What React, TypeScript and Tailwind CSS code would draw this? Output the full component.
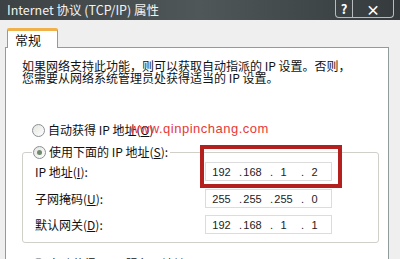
import React from 'react';

interface RadioProps {
  checked?: boolean;
  children: React.ReactNode;
}

function Radio({ checked = false, children }: RadioProps) {
  return (
    <div className="flex h-[16px] items-center">
      <span className="flex h-[13px] w-[13px] items-center justify-center rounded-full border border-[#8a9096] bg-gradient-to-br from-[#e4e4e0] to-white">
        {checked && <span className="h-[5px] w-[5px] rounded-full bg-[#6f8a6f]" />}
      </span>
      <span className="ml-[3px] whitespace-nowrap">{children}</span>
    </div>
  );
}

interface IpFieldProps {
  octets: string[];
}

function IpField({ octets }: IpFieldProps) {
  return (
    <div className="flex h-[19px] w-[127px] items-center border border-[#dcdcdc] bg-white font-['Liberation_Sans',sans-serif] text-[11px] text-[#222]">
      {octets.map((o, i) => (
        <div key={i} className="relative flex w-[31px] justify-center">
          {i > 0 && <span className="absolute left-[2px]">.</span>}
          <span>{o}</span>
        </div>
      ))}
    </div>
  );
}

interface RowProps {
  label: React.ReactNode;
  octets: string[];
  className?: string;
}

function Row({ label, octets, className = '' }: RowProps) {
  return (
    <div className={`flex items-center ${className}`}>
      <div className="w-[173px] pl-[3px] whitespace-nowrap">{label}</div>
      <IpField octets={octets} />
    </div>
  );
}

export default function App() {
  return (
    <div className="relative h-[259px] w-[400px] overflow-hidden bg-[#efefef] font-['Noto_Sans_CJK_SC',sans-serif] text-[12px] leading-[12px] text-[#111]">
      {/* title bar */}
      <div className="flex h-[20px] items-center justify-between bg-gradient-to-r from-[#3d4244] via-[#4f5759] to-[#353b3d] pl-[7px] pr-[6px]">
        <span className="text-[12.5px] text-[#f2f2f2]">Internet 协议 (TCP/IP) 属性</span>
        <div className="-mt-[5px] flex h-[20px] rounded-b-[4px] border border-t-0 border-[#b8bcbe] text-[13px] font-bold text-white">
          <div className="flex w-[17px] items-center justify-center border-r border-[#b8bcbe] pt-[3px]">?</div>
          <div className="flex w-[40px] items-center justify-center pt-[3px] text-[14px]">×</div>
        </div>
      </div>

      {/* body */}
      <div className="pl-[5px] pr-[11px] pt-[8px]">
        <div className="relative z-10 -mb-px ml-[2px] flex h-[20px] w-[51px] items-center rounded-t-[2px] border border-b-0 border-t-[3px] border-[#919b9c] border-t-[#f0b14c] bg-white pl-[7px] text-[13px]">
          常规
        </div>
        <div className="h-[220px] border border-[#919b9c] bg-white">
          <div className="pl-[16px] pt-[12px]">
            <p>如果网络支持此功能，则可以获取自动指派的 IP 设置。否则，</p>
            <p>您需要从网络系统管理员处获得适当的 IP 设置。</p>
          </div>

          <div className="mt-[38px] pl-[26px]">
            <Radio>
              自动获得 IP 地址(<span className="underline">O</span>)
            </Radio>
          </div>

          <fieldset className="ml-[16px] mt-[6px] w-[357px] rounded-[3px] border border-[#d0d0c8] pb-[8px] pl-[9px]">
            <legend className="pl-px pr-[2px]">
              <Radio checked>
                使用下面的 IP 地址(<span className="underline">S</span>):
              </Radio>
            </legend>
            <Row
              className="mt-[2px]"
              label={<>IP 地址(<span className="underline">I</span>):</>}
              octets={['192', '168', '1', '2']}
            />
            <Row
              className="mt-[8px]"
              label={<>子网掩码(<span className="underline">U</span>):</>}
              octets={['255', '255', '255', '0']}
            />
            <Row
              className="mt-[7px]"
              label={<>默认网关(<span className="underline">D</span>):</>}
              octets={['192', '168', '1', '1']}
            />
          </fieldset>

          <div className="mt-[13px] pl-[26px]">
            <Radio>
              自动获得 DNS 服务器地址(<span className="underline">B</span>)
            </Radio>
          </div>
        </div>
      </div>

      {/* watermark + annotation overlay */}
      <span className="absolute left-[130px] top-[122px] font-['Liberation_Sans',sans-serif] text-[13px] leading-[14px] tracking-[0.5px] text-[#e8383a]">
        www.qinpinchang.com
      </span>
      <div className="absolute left-[200px] top-[145px] h-[43px] w-[142px] border-[4px] border-[#b3201e]" />
    </div>
  );
}
